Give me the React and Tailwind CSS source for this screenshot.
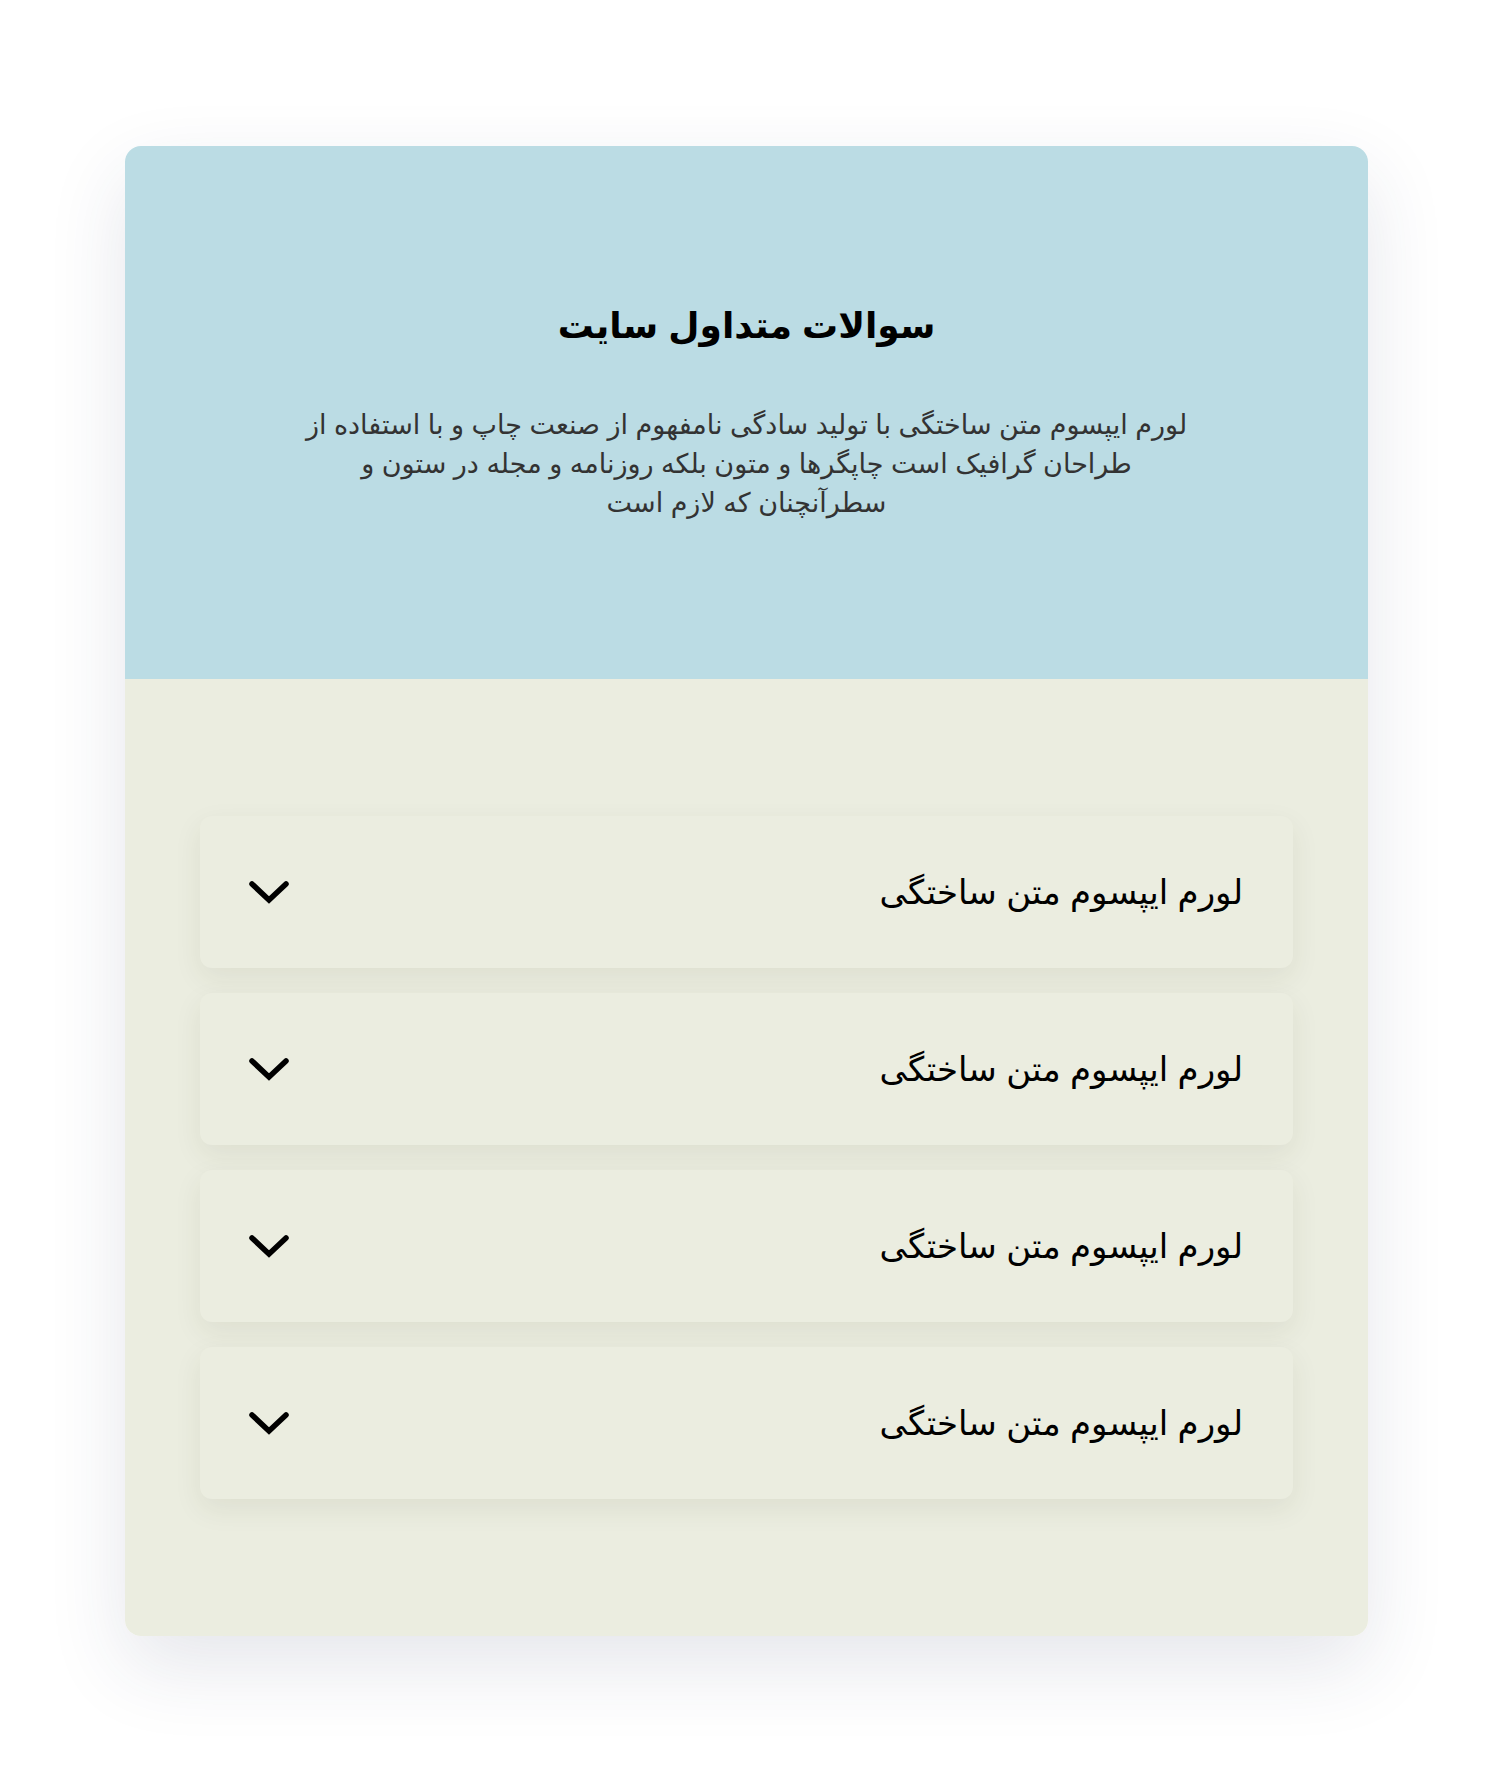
import React, { useState } from 'react';

const faqs = [
    { id: 1, q: 'لورم ایپسوم متن ساختگی', a: 'لورم ایپسوم متن ساختگی با تولید سادگی نامفهوم از صنعت چاپ و با استفاده از طراحان گرافیک است.' },
    { id: 2, q: 'لورم ایپسوم متن ساختگی', a: 'لورم ایپسوم متن ساختگی با تولید سادگی نامفهوم از صنعت چاپ و با استفاده از طراحان گرافیک است.' },
    { id: 3, q: 'لورم ایپسوم متن ساختگی', a: 'لورم ایپسوم متن ساختگی با تولید سادگی نامفهوم از صنعت چاپ و با استفاده از طراحان گرافیک است.' },
    { id: 4, q: 'لورم ایپسوم متن ساختگی', a: 'لورم ایپسوم متن ساختگی با تولید سادگی نامفهوم از صنعت چاپ و با استفاده از طراحان گرافیک است.' },
];

const Chevron = ({ open }) => (
    <svg
        width="40"
        height="24"
        viewBox="0 0 40 24"
        className={open ? 'rotate-180' : ''}
        fill="none"
        stroke="currentColor"
        strokeWidth="5.5"
        strokeLinecap="round"
        strokeLinejoin="miter"
    >
        <polyline points="3,4 20,20 37,4" />
    </svg>
);

const FaqItem = ({ item, open, onToggle }) => (
    <div className="bg-[#ebede0] rounded-xl shadow-[0_10px_28px_rgba(60,60,30,0.08)]">
        <button
            onClick={onToggle}
            className="w-full h-[152px] flex items-center justify-between pr-[50px] pl-[49px] text-black"
        >
            <span className="text-[34px] leading-none">{item.q}</span>
            <Chevron open={open} />
        </button>
        {open && (
            <p className="px-[50px] pb-8 text-[24px] text-[#333]">{item.a}</p>
        )}
    </div>
);

const App = () => {
    const [openId, setOpenId] = useState(null);

    return (
        <div
            dir="rtl"
            className="min-h-screen bg-white py-[146px] font-['Liberation_Sans','DejaVu_Sans',sans-serif]"
        >
            <div className="w-[1243px] mx-auto rounded-2xl overflow-hidden shadow-[0_30px_80px_rgba(40,50,90,0.12)]">
                {/* Header */}
                <div className="h-[533px] bg-[#bbdce4] flex flex-col items-center pt-[162px] text-center">
                    <h1 className="text-[36px] font-bold text-black leading-none">سوالات متداول سایت</h1>
                    <p className="mt-[62px] w-[890px] text-[27px] leading-[39px] text-[#333]">
                        لورم ایپسوم متن ساختگی با تولید سادگی نامفهوم از صنعت چاپ و با استفاده از طراحان گرافیک است چاپگرها و متون بلکه روزنامه و مجله در ستون و سطرآنچنان که لازم است
                    </p>
                </div>

                {/* Questions */}
                <div className="bg-[#ebede0] px-[75px] py-[137px] flex flex-col gap-[25px]">
                    {faqs.map((item) => (
                        <FaqItem
                            key={item.id}
                            item={item}
                            open={openId === item.id}
                            onToggle={() => setOpenId(openId === item.id ? null : item.id)}
                        />
                    ))}
                </div>
            </div>
        </div>
    );
};

export default App;
